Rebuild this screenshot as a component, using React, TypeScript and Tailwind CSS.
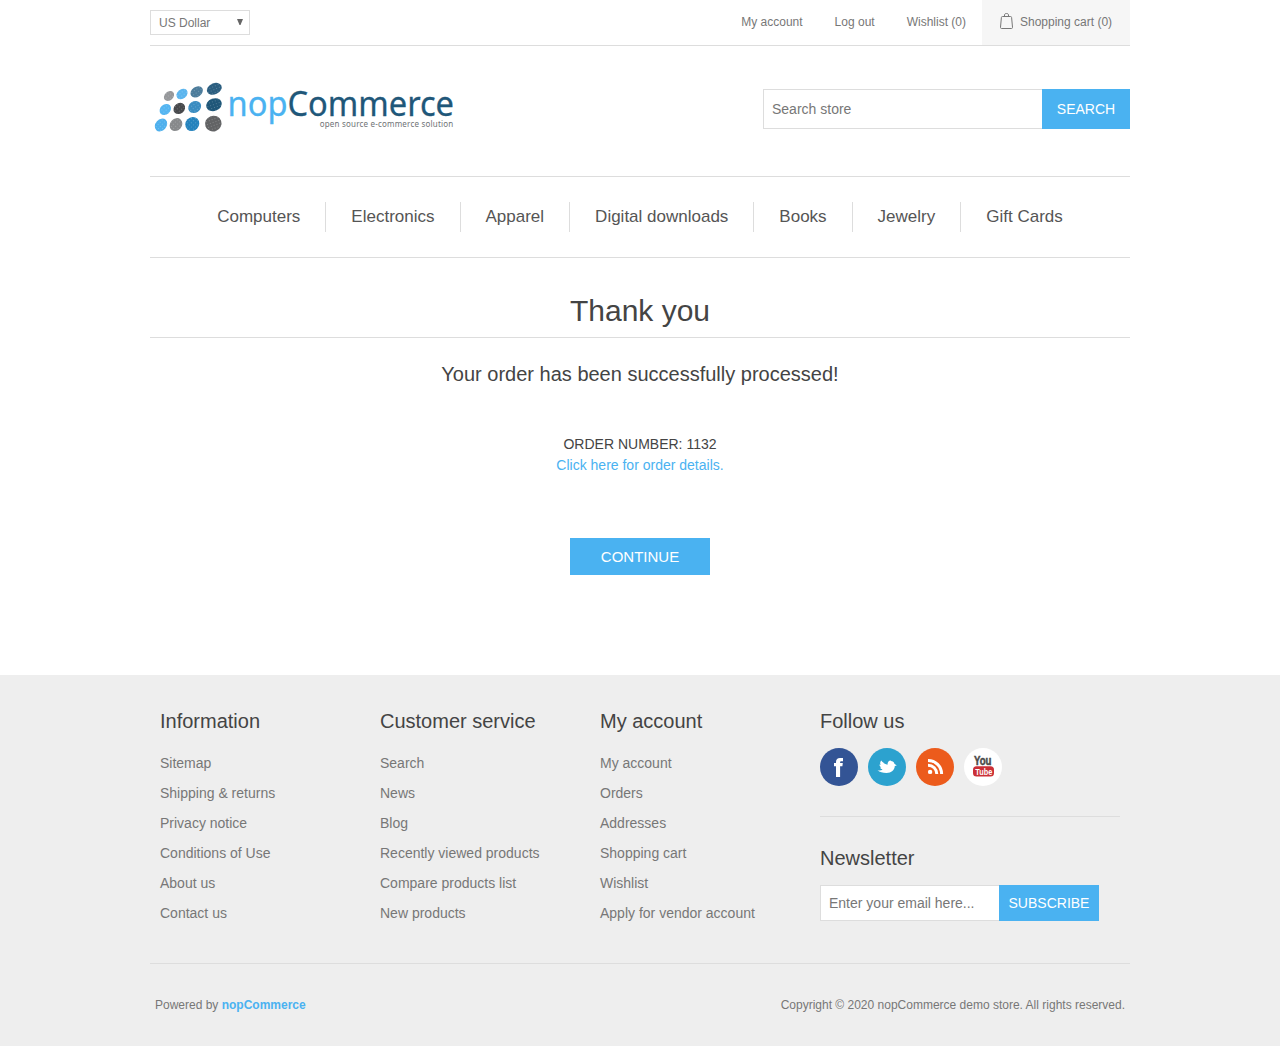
import React from "react";

// x, y, rx, ry, rotation, fill
const dots: [number, number, number, number, number, string][] = [
  [19, 19, 5.7, 4.3, -42, "#96989b"],
  [32, 17, 6.1, 4.7, -40, "#5bb5ee"],
  [46.7, 14.8, 6.7, 5, -35, "#4c7c9b"],
  [64.3, 11.8, 7.8, 5.5, -25, "#2b5e80"],
  [15.3, 32.5, 6.2, 5, -42, "#54b5f1"],
  [29.3, 31.4, 6.2, 5.2, -40, "#47494c"],
  [44.7, 30, 6.8, 5.7, -35, "#3b8dc1"],
  [64, 27.7, 8, 6.3, -20, "#1f5779"],
  [11, 48, 7, 5.5, -48, "#4fb0ed"],
  [26, 47.6, 6.9, 5.9, -48, "#87898b"],
  [42.3, 47, 7.3, 6.7, -45, "#2583bd"],
  [63.3, 46.6, 8.3, 7.9, -20, "#626365"],
];

function Logo() {
  return (
    <svg width="310" height="60" viewBox="0 0 310 60" aria-label="nopCommerce">
      <defs>
        <pattern id="grain" width="3" height="3" patternUnits="userSpaceOnUse">
          <rect width="1" height="1" fill="#fff" opacity=".22" />
        </pattern>
      </defs>
      {dots.map(([x, y, rx, ry, angle, fill], i) => (
        <g key={i} transform={`rotate(${angle} ${x} ${y})`}>
          <ellipse cx={x} cy={y} rx={rx} ry={ry} fill={fill} />
          <ellipse cx={x} cy={y} rx={rx} ry={ry} fill="url(#grain)" />
        </g>
      ))}
      <text x="77.500" y="39" fontSize="34.500" fontFamily='"Noto Sans", sans-serif' textLength="226.500" lengthAdjust="spacingAndGlyphs" strokeWidth=".3"><tspan fill="#4ab2f1" stroke="#4ab2f1">nop</tspan><tspan fill="#1f5779" stroke="#1f5779">Commerce</tspan></text>
      <text x="169.700" y="49.500" fontSize="8" fontFamily='"Noto Sans", sans-serif' textLength="133.500" lengthAdjust="spacing" fill="#6f7376">open source e-commerce solution</text>
    </svg>
  );
}

const nav = ["Computers", "Electronics", "Apparel", "Digital downloads", "Books", "Jewelry", "Gift Cards"];

const columns = [
  { title: "Information", links: ["Sitemap", "Shipping & returns", "Privacy notice", "Conditions of Use", "About us", "Contact us"] },
  { title: "Customer service", links: ["Search", "News", "Blog", "Recently viewed products", "Compare products list", "New products"] },
  { title: "My account", links: ["My account", "Orders", "Addresses", "Shopping cart", "Wishlist", "Apply for vendor account"] },
];

function Social() {
  return (
    <div className="flex gap-[10px]">
      <svg width="38" height="38" viewBox="0 0 38 38">
        <circle cx="19" cy="19" r="19" fill="#335495" />
        <path d="M16 29V18.200h-2V15h2v-1c0-2.800 1.500-4 4-4h3v3.200h-1.500c-1 0-1.400.4-1.400 1.200v.6h2.700l-.4 3.200h-2.300V29z" fill="#fff" />
      </svg>
      <svg width="38" height="38" viewBox="0 0 38 38">
        <circle cx="19" cy="19" r="19" fill="#2ca2cf" />
        <path d="M9.500 22.200C11.700 22.700 13.300 22.400 14.600 21.500C13.200 21.200 12.300 20.500 12.200 19.600L13.300 19.500C12 18.700 11.400 17.700 11.400 16.600L12.600 16.900C11.900 15.600 12 14 13.300 12.600C15 15 17 16 19.500 16.700C19.500 14.300 20.500 12.700 22.800 12.200L22.600 13.100C24.600 13 26 14 26.400 15.800L28.800 17.600L26.800 18C26.600 22 23.400 24.900 18.500 24.900C14.700 24.900 11.700 24.200 9.500 22.200Z" fill="#fff" />
      </svg>
      <svg width="38" height="38" viewBox="0 0 38 38">
        <circle cx="19" cy="19" r="19" fill="#ec5b1c" />
        <circle cx="14.100" cy="23.900" r="2.200" fill="#fff" />
        <path d="M12 17.200c4.900 0 8.800 3.900 8.800 8.800M12 12.400c7.500 0 13.600 6.100 13.600 13.600" fill="none" stroke="#fff" strokeWidth="3" />
      </svg>
      <svg width="38" height="38" viewBox="0 0 38 38">
        <circle cx="19" cy="19" r="19" fill="#fff" />
        <text x="10" y="17" fontSize="12.500" fontWeight="700" fontFamily='"Liberation Sans", sans-serif' textLength="17.500" lengthAdjust="spacingAndGlyphs" fill="#494949" stroke="#494949" strokeWidth=".5">You</text>
        <rect x="9" y="18.200" width="21" height="10.200" rx="3.500" fill="#cb3037" />
        <text x="11.300" y="26.800" fontSize="9.800" fontWeight="700" fontFamily='"Liberation Sans", sans-serif' textLength="17" lengthAdjust="spacingAndGlyphs" fill="#fff">Tube</text>
      </svg>
    </div>
  );
}

export default function App() {
  return (
    <div className="min-h-[1046px] bg-white font-['Liberation_Sans',Arial,sans-serif] text-[14px] text-[#777]">
      <div className="mx-auto h-[675px] w-[980px]">
        <header>
          <div className="flex h-[46px] items-start justify-between border-b border-[#ddd] text-[12px]">
            <div className="mt-[10px] flex h-[25px] w-[100px] items-center justify-between border border-[#ddd] pr-[6px] pl-2">
              <span>US Dollar</span>
              <svg className="-mt-px" width="6" height="6" viewBox="0 0 6 6"><path d="M0 0h6L3.500 6h-1z" fill="#666" /></svg>
            </div>
            <div className="flex h-[45px] items-start leading-[44px]">
              <a className="mr-8">My account</a>
              <a className="mr-8">Log out</a>
              <a className="mr-4">Wishlist (0)</a>
              <a className="flex h-[45px] w-[148px] items-start bg-[#f6f6f6] pl-[18px]">
                <svg className="mt-[13px] mr-[7px]" width="13" height="17" viewBox="0 0 13 17" fill="none" stroke="#777">
                  <path d="M2.500 3.500h8c.7 0 1 .3 1.100 1l.9 9.700c.1 1-.3 1.300-1.300 1.300H1.800c-1 0-1.400-.3-1.300-1.300l.9-9.700c.1-.7.4-1 1.100-1zM4.500 3.300V2C4.500 1 5.200.500 6.500.500s2 .5 2 1.500v1.300" />
                </svg>
                <span>Shopping cart (0)</span>
              </a>
            </div>
          </div>
          <div className="flex h-[131px] items-start justify-between border-b border-[#ddd]">
            <a className="mt-[31px]"><Logo /></a>
            <form className="mt-[43px] flex h-10">
              <input className="h-10 w-[279px] border border-r-0 border-[#ddd] bg-white px-2 outline-none placeholder:text-[#777] placeholder:opacity-100" placeholder="Search store" />
              <button type="button" className="w-[88px] bg-[#4ab2f1] text-[14px] text-white">SEARCH</button>
            </form>
          </div>
          <nav className="flex h-[81px] items-center justify-center border-b border-[#ddd] text-[17px] text-[#555]">
            {nav.map((item) => (
              <a key={item} className="flex h-[30px] items-center border-r border-[#ddd] px-[25px] pb-[1px] last:border-r-0">{item}</a>
            ))}
          </nav>
        </header>
        <main className="text-center text-[#444]">
          <h1 className="h-[80px] border-b border-[#ddd] pt-[35px] text-[30px] leading-[36px]">Thank you</h1>
          <h2 className="pt-[24px] text-[20px] leading-6">Your order has been successfully processed!</h2>
          <p className="mt-[48px] leading-[21px]">ORDER NUMBER: 1132</p>
          <a className="block leading-[21px] text-[#4ab2f1]">Click here for order details.</a>
          <button className="mt-[62px] h-[37px] w-[140px] bg-[#4ab2f1] pt-[2px] text-[15px] text-white">CONTINUE</button>
        </main>
      </div>
      <footer className="h-[371px] bg-[#eee]">
        <div className="mx-auto w-[980px]">
          <div className="flex h-[289px] border-b border-[#ddd] pt-[34px] pl-[10px]">
            {columns.map((column) => (
              <section key={column.title} className="w-[220px]">
                <h3 className="text-[20px] leading-6 text-[#444]">{column.title}</h3>
                <ul className="mt-[15px]">
                  {column.links.map((link) => <li key={link} className="h-[30px] leading-[30px]">{link}</li>)}
                </ul>
              </section>
            ))}
            <section className="w-[300px]">
              <h3 className="text-[20px] leading-6 text-[#444]">Follow us</h3>
              <div className="mt-[15px] h-[69px] border-b border-[#ddd]"><Social /></div>
              <h3 className="mt-[29px] text-[20px] leading-6 text-[#444]">Newsletter</h3>
              <form className="mt-[15px] flex h-9">
                <input className="h-9 w-[179px] border border-r-0 border-[#ddd] bg-white px-2 outline-none placeholder:text-[#777] placeholder:opacity-100" placeholder="Enter your email here..." />
                <button type="button" className="w-[100px] bg-[#4ab2f1] text-white">SUBSCRIBE</button>
              </form>
            </section>
          </div>
          <div className="flex justify-between px-[5px] pt-[32px] text-[12px] leading-[18px]">
            <span>Powered by <b className="text-[#4ab2f1]">nopCommerce</b></span>
            <span>Copyright © 2020 nopCommerce demo store. All rights reserved.</span>
          </div>
        </div>
      </footer>
    </div>
  );
}
